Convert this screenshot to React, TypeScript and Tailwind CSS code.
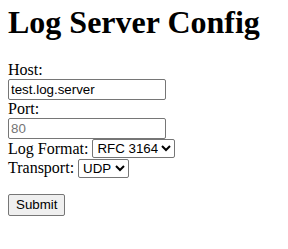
export default function App() {
  return (
    <div className="min-h-screen bg-white px-2 font-['Liberation_Serif','Times_New_Roman',serif] text-base text-black">
      <h1 className="pt-[4px] text-[32px] font-bold leading-[37px]">Log Server Config</h1>

      <form className="mt-[20px]" onSubmit={e => e.preventDefault()}>
        <div className="h-[18px] leading-[18px]">Host:</div>
        <input
          type="text"
          defaultValue="test.log.server"
          className="block h-[21px] w-[158px] rounded-[2px] border border-[#767676] bg-white px-[2px] font-['Liberation_Sans',Arial,sans-serif] text-[13.33px] text-black outline-none"
        />

        <div className="h-[18px] leading-[18px]">Port:</div>
        <input
          type="text"
          placeholder="80"
          className="block h-[21px] w-[158px] rounded-[2px] border border-[#767676] bg-white px-[2px] font-['Liberation_Sans',Arial,sans-serif] text-[13.33px] text-black outline-none placeholder:text-[#757575]"
        />

        <div className="flex h-[19px] items-center gap-[4px]">
          <span className="leading-[18px]">Log Format:</span>
          <select
            defaultValue="rfc3164"
            className="h-[19px] rounded-[2px] border border-[#767676] bg-white font-['Liberation_Sans',Arial,sans-serif] text-[13.33px] text-black"
          >
            <option value="rfc3164">RFC 3164</option>
            <option value="rfc5424">RFC 5424</option>
          </select>
        </div>

        <div className="flex h-[20px] items-center gap-[4px]">
          <span className="leading-[18px]">Transport:</span>
          <select
            defaultValue="udp"
            className="h-[19px] rounded-[2px] border border-[#767676] bg-white font-['Liberation_Sans',Arial,sans-serif] text-[13.33px] text-black"
          >
            <option value="udp">UDP</option>
            <option value="tcp">TCP</option>
          </select>
        </div>

        <button
          type="submit"
          className="mt-[16px] h-[22px] rounded-[2px] border border-[#767676] bg-[#efefef] px-[7px] font-['Liberation_Sans',Arial,sans-serif] text-[13.33px] text-black"
        >
          Submit
        </button>
      </form>
    </div>
  );
}
